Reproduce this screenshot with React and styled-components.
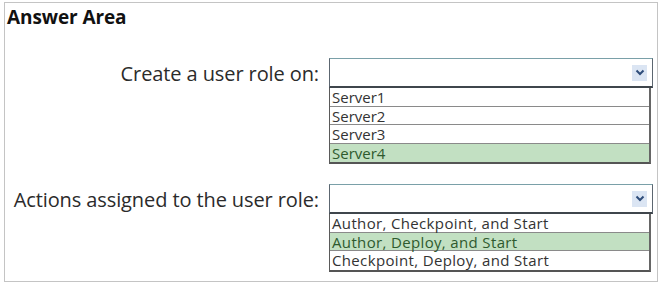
import styled, { createGlobalStyle } from 'styled-components';

const GlobalStyle = createGlobalStyle`
  html, body {
    margin: 0;
    padding: 0;
    background: #ffffff;
  }
  body {
    font-family: "Open Sans", "Noto Sans", sans-serif;
  }
`;

const Page = styled.div`
  padding: 2px 4px 0 4px;
  width: 661px;
  height: 286px;
  box-sizing: border-box;
`;

const AnswerBox = styled.div`
  width: 654px;
  height: 280px;
  box-sizing: border-box;
  border: 1px solid #c4c4c4;
  padding: 3px 0 0 2px;
`;

const Heading = styled.div`
  font-family: "Open Sans", sans-serif;
  font-weight: 700;
  font-size: 19px;
  line-height: 22px;
  color: #111;
  letter-spacing: -0.1px;
`;

const Form = styled.div`
  display: grid;
  grid-template-columns: 315px 324px;
  column-gap: 7px;
  row-gap: 20px;
  margin-top: 30px;
  align-items: start;
`;

const Label = styled.div`
  text-align: right;
  padding-right: 3px;
  font-size: 20px;
  line-height: 32px;
  color: #2b2b2b;
  letter-spacing: -0.1px;
`;

const Dropdown = styled.div`
  display: flex;
  flex-direction: column;
`;

const Select = styled.div`
  height: 30px;
  box-sizing: border-box;
  border: 1px solid #5c6670;
  border-top-color: #7aa0a8;
  border-bottom: 2px solid #3f464c;
  display: flex;
  align-items: center;
  justify-content: flex-end;
  padding-right: 5px;
`;

const Chevron = styled.div`
  width: 15px;
  height: 16px;
  background: #dbe5f3;
  display: flex;
  align-items: center;
  justify-content: center;
`;

const List = styled.div`
  width: 322px;
  border: 1px solid #5a5a5a;
  border-top: none;
  border-bottom: 2px solid #555;
  border-right: 2px solid #666;
  box-sizing: border-box;
`;

const Option = styled.div`
  height: 18.5px;
  box-sizing: border-box;
  padding-left: 2px;
  font-size: 15px;
  line-height: 18px;
  color: ${(p) => (p.$selected ? '#2e5a2e' : '#333')};
  background: ${(p) => (p.$selected ? '#c2e0c2' : '#fff')};
  border-bottom: ${(p) => (p.$last ? 'none' : '1px solid #8a8a8a')};
  letter-spacing: ${(p) => p.$ls || 0}px;
`;

function ChevronIcon() {
  return (
    <svg width="10" height="7" viewBox="0 0 10 7">
      <path d="M1.5 1.5 L5 5 L8.5 1.5" fill="none" stroke="#2f4d7a" strokeWidth="2" />
    </svg>
  );
}

const questions = [
  {
    label: 'Create a user role on:',
    ls: 0,
    options: ['Server1', 'Server2', 'Server3', 'Server4'],
    selected: 3,
  },
  {
    label: 'Actions assigned to the user role:',
    ls: 0.35,
    options: ['Author, Checkpoint, and Start', 'Author, Deploy, and Start', 'Checkpoint, Deploy, and Start'],
    selected: 1,
  },
];

export default function App() {
  return (
    <Page>
      <GlobalStyle />
      <AnswerBox>
        <Heading>Answer Area</Heading>
        <Form>
          {questions.map((q) => [
            <Label key={q.label + 'l'}>{q.label}</Label>,
            <Dropdown key={q.label + 'd'}>
              <Select>
                <Chevron>
                  <ChevronIcon />
                </Chevron>
              </Select>
              <List>
                {q.options.map((o, i) => (
                  <Option
                    key={o}
                    $ls={q.ls}
                    $selected={i === q.selected}
                    $last={i === q.options.length - 1}
                  >
                    {o}
                  </Option>
                ))}
              </List>
            </Dropdown>,
          ])}
        </Form>
      </AnswerBox>
    </Page>
  );
}
